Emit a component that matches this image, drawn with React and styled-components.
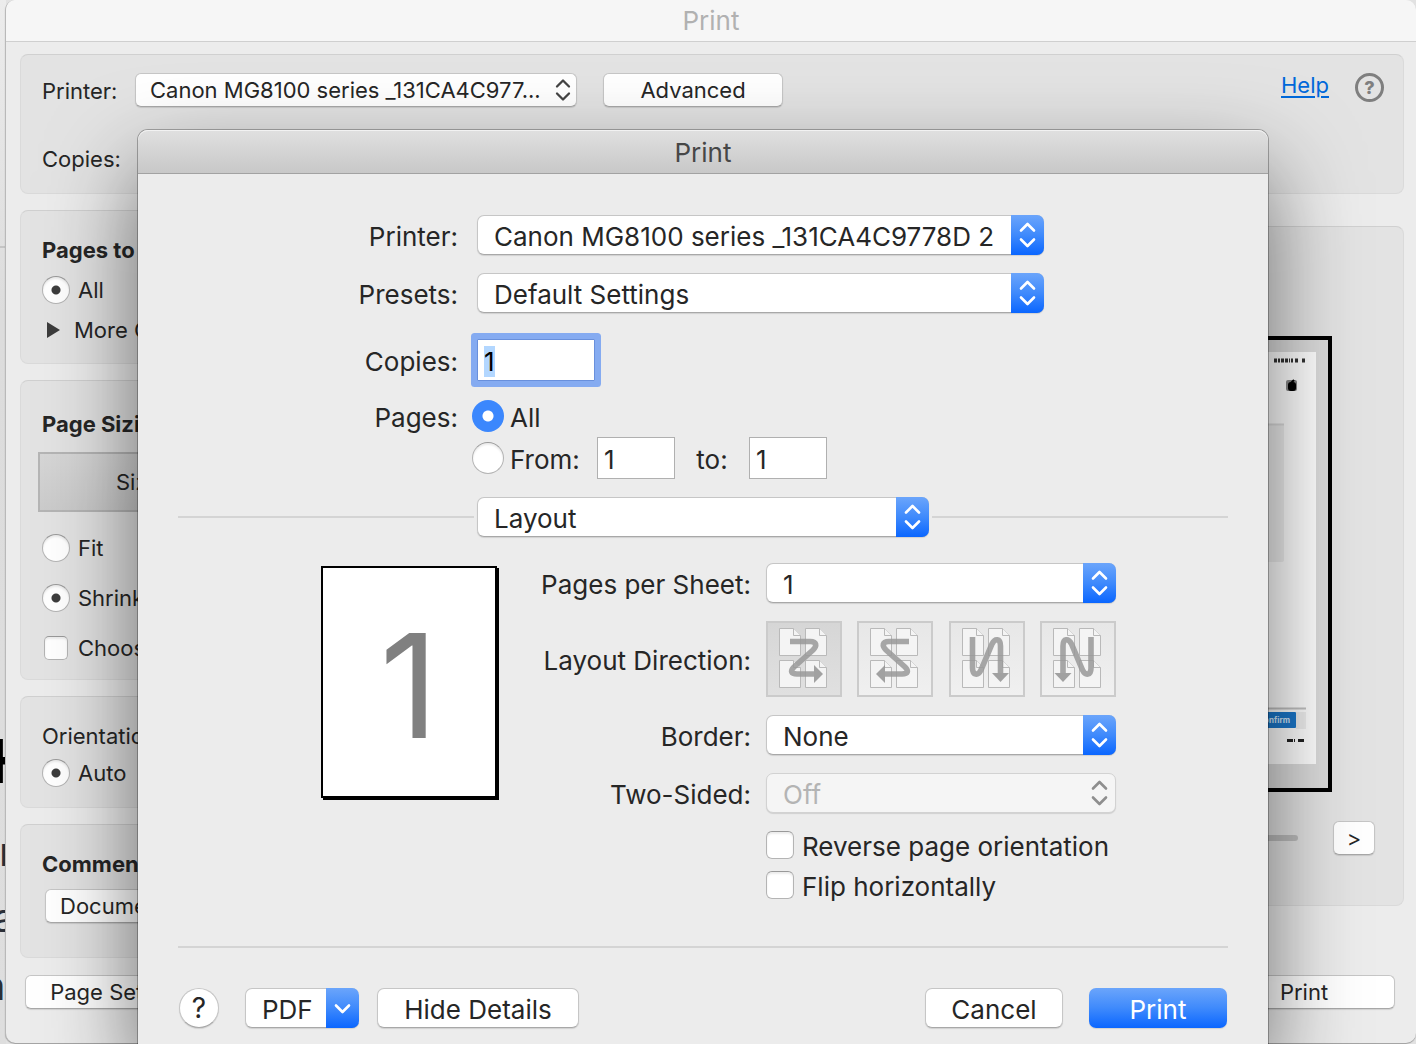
import React, {useState} from 'react'
import styled, {createGlobalStyle, css} from 'styled-components'

const directions = [
  {name: 'Left to right, then down', sideways: true},
  {name: 'Right to left, then down', sideways: true, mirrored: true},
  {name: 'Down, then left to right'},
  {name: 'Down, then right to left', mirrored: true}
]

const Z_PATH = 'M24 20.5H44C51 20.5 51 25 47 29L28 46C24 50 25 53 31 53H49'
const Z_ARROW = 'M48 44L57 53L48 62Z'
const N_PATH = 'M23.5 16V47C23.5 54.5 29 55 32 49L43 23C46 17 51.5 17 51.5 25V53'
const N_ARROW = 'M43 52H60L51.5 61Z'

const DirectionIcon = ({sideways, mirrored}) => (
  <svg width="72" height="72" viewBox="2 2 72 72" fill="none" aria-hidden="true">
    {[[13.5, 7.5], [39.5, 7.5], [13.5, 39.5], [39.5, 39.5]].map(([x, y]) => (
      <g key={`${x}-${y}`} transform={`translate(${x} ${y})`} stroke="#b9b9b9" fill="#f4f4f4">
        <path d="M0 0H14L21 7V27H0Z" />
        <path d="M14 0V7H21" />
      </g>
    ))}
    <g transform={mirrored ? `translate(${sideways ? 76 : 74.5} 0) scale(-1 1)` : undefined} opacity="0.85">
      <path d={sideways ? Z_PATH : N_PATH} stroke="#999" strokeWidth="5.6" />
      <path d={sideways ? Z_ARROW : N_ARROW} fill="#939393" />
    </g>
  </svg>
)

const PopUp = ({id, label, options, width, disabled}) => (
  <PopUpFrame $width={width}>
    <BigSelect id={id} aria-label={label} disabled={disabled}>
      {options.map(o => <option key={o}>{o}</option>)}
    </BigSelect>
    <Cap $disabled={disabled}>
      <svg width="33" height="40" viewBox="0 0 33 40" fill="none" stroke={disabled ? '#8e8e8e' : '#fff'} strokeWidth="2.6" strokeLinecap="round" strokeLinejoin="round">
        <path d="M10 15.5L16.5 9L23 15.5M10 24.5L16.5 31L23 24.5" />
      </svg>
    </Cap>
  </PopUpFrame>
)

const SmallPopUp = ({id, label, width, children}) => (
  <SmallPopUpFrame $width={width}>
    <SmallSelect id={id} aria-label={label}><option>{children}</option></SmallSelect>
    <SmallCap>
      <svg width="28" height="34" viewBox="0 0 28 34" fill="none" stroke="#444" strokeWidth="2.3" strokeLinecap="round" strokeLinejoin="round">
        <path d="M8 13.5L14 7.5L20 13.5M8 20.5L14 26.5L20 20.5" />
      </svg>
    </SmallCap>
  </SmallPopUpFrame>
)

const Thumbnail = () => (
  <svg width="328" height="412" viewBox="0 0 328 412" role="img" aria-label="Page preview">
    <rect width="328" height="412" fill="#fff" />
    <rect x="24" y="72" width="272" height="138" rx="2" fill="#f0f0f0" />
    <path d="M24 72.5H296" stroke="#dedede" strokeWidth="2" />
    <path d="M286 8.5H292M293 8.5H302M303 8.5H305M307 8.5H311M314 8.5H318" stroke="#333" strokeWidth="4" strokeDasharray="3 1" />
    <rect x="298" y="28" width="11" height="11" rx="2" fill="#888" />
    <rect x="300" y="30" width="8" height="9" rx="3" fill="#000" />
    <path d="M303 31L306 28" stroke="#000" strokeWidth="2" />
    <path d="M24 356.5H318" stroke="#c2c2c2" strokeWidth="2" />
    <rect x="308" y="360" width="10" height="17" fill="#f0f0f0" />
    <rect x="240" y="360" width="68" height="16" rx="1" fill="#1b78cc" />
    <text x="302" y="371" textAnchor="end" fontSize="8" fontWeight="700" fill="#d6e9fb">Confirm</text>
    <path d="M299 388.5H307M310 388.5H316" stroke="#222" strokeWidth="3" strokeDasharray="6 1" />
  </svg>
)

const BackWindow = () => (
  <Window>
    <WindowTitle>Print</WindowTitle>
    <WindowBody>
      <TopPanel>
        <TopRow>
          <TopLabel htmlFor="back-printer">Printer:</TopLabel>
          <SmallPopUp id="back-printer" width="442px">Canon MG8100 series _131CA4C977...</SmallPopUp>
          <SmallButton $width="180px">Advanced</SmallButton>
          <HelpGroup>
            <a href="#help">Help</a>
            <RoundHelp aria-label="Accessibility help">?</RoundHelp>
          </HelpGroup>
        </TopRow>
        <TopRow>
          <TopLabel as="span">Copies:</TopLabel>
        </TopRow>
      </TopPanel>
      <Columns>
        <Stack>
          <Panel $top={26} $bottom={20} $gap={12}>
            <Heading>Pages to Print</Heading>
            <Choice><Radio type="radio" name="back-pages" defaultChecked />All</Choice>
            <More>
              <svg width="14" height="16" viewBox="0 0 14 16"><path d="M1 0L14 8L1 16Z" fill="#3c3c3c" /></svg>
              More Options
            </More>
          </Panel>
          <Panel $top={30} $bottom={18} $gap={22}>
            <SizeGroup>
              <Heading>Page Sizing &amp; Handling</Heading>
              <SizeButton>Size</SizeButton>
            </SizeGroup>
            <Choice><Radio type="radio" name="back-size" />Fit</Choice>
            <Choice><Radio type="radio" name="back-size" defaultChecked />Shrink</Choice>
            <Choice><SmallCheck type="checkbox" />Choose</Choice>
          </Panel>
          <Panel $top={26} $bottom={21} $gap={9}>
            <Line>Orientation:</Line>
            <Choice><Radio type="radio" name="back-orient" defaultChecked />Auto</Choice>
          </Panel>
          <Panel $top={26} $bottom={35} $gap={11}>
            <Heading>Comments &amp; Forms</Heading>
            <Indent>
              <SmallPopUp label="Comments and forms" width="340px">Document</SmallPopUp>
            </Indent>
          </Panel>
        </Stack>
        <PreviewPanel>
          <PreviewFrame><Thumbnail /></PreviewFrame>
          <Pager>
            <Track type="range" aria-label="Preview page" />
            <SmallButton $width="42px" aria-label="Next page">&gt;</SmallButton>
          </Pager>
        </PreviewPanel>
      </Columns>
      <WindowFooter>
        <SmallButton $width="189px">Page Setup...</SmallButton>
        <SmallButton $width="182px">Print</SmallButton>
      </WindowFooter>
    </WindowBody>
  </Window>
)

const PrintDialog = () => {
  const [range, setRange] = useState('all')
  const [direction, setDirection] = useState(0)

  return (
    <Dialog role="dialog" aria-label="Print">
      <DialogTitle>Print</DialogTitle>
      <DialogBody>
        <Row $space={41}>
          <RowLabel htmlFor="printer">Printer:</RowLabel>
          <Inset><PopUp id="printer" width="567px" options={['Canon MG8100 series _131CA4C9778D 2']} /></Inset>
        </Row>
        <Row $space={18}>
          <RowLabel htmlFor="presets">Presets:</RowLabel>
          <Inset><PopUp id="presets" width="567px" options={['Default Settings']} /></Inset>
        </Row>
        <Row $space={26}>
          <RowLabel htmlFor="copies">Copies:</RowLabel>
          <Inset>
            <TextBox id="copies" $width="118px" defaultValue="1" autoFocus onFocus={e => e.target.select()} />
          </Inset>
        </Row>
        <Row $space={19}>
          <RowLabel as="span">Pages:</RowLabel>
          <BigChoice>
            <BigRadio type="radio" name="pages" checked={range === 'all'} onChange={() => setRange('all')} />
            <span>All</span>
          </BigChoice>
        </Row>
        <Row $space={5}>
          <span />
          <RangeFields>
            <BigChoice $width="125px">
              <BigRadio type="radio" name="pages" checked={range === 'from'} onChange={() => setRange('from')} />
              <span>From:</span>
            </BigChoice>
            <TextBox $width="78px" defaultValue="1" aria-label="From page" />
            <ToLabel htmlFor="to-page">to:</ToLabel>
            <TextBox id="to-page" $width="78px" defaultValue="1" />
          </RangeFields>
        </Row>
        <SectionPicker>
          <Rule />
          <PopUp label="Section" width="452px" options={['Layout']} />
          <Rule />
        </SectionPicker>
        <Pane>
          <SheetPreview>1</SheetPreview>
          <Options>
            <RowLabel htmlFor="per-sheet">Pages per Sheet:</RowLabel>
            <PopUp id="per-sheet" width="350px" options={['1']} />
            <RowLabel as="span">Layout Direction:</RowLabel>
            <Directions>
              {directions.map((d, i) => (
                <DirectionButton key={d.name} aria-label={d.name} aria-pressed={direction === i} $active={direction === i} onClick={() => setDirection(i)}>
                  <DirectionIcon {...d} />
                </DirectionButton>
              ))}
            </Directions>
            <RowLabel htmlFor="border">Border:</RowLabel>
            <PopUp id="border" width="350px" options={['None']} />
            <RowLabel htmlFor="two-sided">Two-Sided:</RowLabel>
            <PopUp id="two-sided" width="350px" options={['Off']} disabled />
            <span />
            <Checks>
              <BigCheckLabel><BigCheck type="checkbox" /><span>Reverse page orientation</span></BigCheckLabel>
              <BigCheckLabel><BigCheck type="checkbox" /><span>Flip horizontally</span></BigCheckLabel>
            </Checks>
          </Options>
        </Pane>
        <Rule />
        <DialogFooter>
          <HelpButton aria-label="Help">?</HelpButton>
          <PdfButton>
            <span>PDF</span>
            <Cap as="span">
              <svg width="33" height="40" viewBox="0 0 33 40" fill="none" stroke="#fff" strokeWidth="2.6" strokeLinecap="round" strokeLinejoin="round">
                <path d="M10 17.5L16.5 24L23 17.5" />
              </svg>
            </Cap>
          </PdfButton>
          <BigButton $width="202px">Hide Details</BigButton>
          <Actions>
            <BigButton $width="138px">Cancel</BigButton>
            <BigButton $width="138px" $primary>Print</BigButton>
          </Actions>
        </DialogFooter>
      </DialogBody>
    </Dialog>
  )
}

const App = () => (
  <Screen>
    <GlobalStyle />
    <Behind aria-hidden="true">
      <BehindLine />
      <Sliver $size={60} $top={716} $shift={-10} $bold>H</Sliver>
      <Sliver $size={40} $top={832} $shift={-1}>r</Sliver>
      <Sliver $size={40} $top={898} $shift={-7}>a</Sliver>
      <Sliver $size={40} $top={966} $shift={-17}>a</Sliver>
    </Behind>
    <BackWindow />
    <PrintDialog />
  </Screen>
)

export default App

const GlobalStyle = createGlobalStyle`
  * {
    box-sizing: border-box;
  }

  body {
    margin: 0;
    background: #e2e2e2;
    color: #262626;
    font-family: Inter, "Liberation Sans", sans-serif;
    font-size: 22px;
  }

  button, input, select {
    font: inherit;
    color: inherit;
    margin: 0;
    padding: 0;
    outline: none;
  }
`

const blueFill = 'linear-gradient(#6ba5fb, #3f8afc 50%, #0a66ff)'

const raised = css`
  background: #fff;
  border: 1px solid #c6c6c6;
  border-bottom-color: #a8a8a8;
  border-radius: 7px;
  box-shadow: 0 1px 1px rgba(0, 0, 0, 0.12);
`

const Screen = styled.div`
  position: relative;
  min-height: 100vh;
  padding: 0 0 1px 5px;
  overflow: hidden;
`

/* the page that shows past the left edge of the window */
const Behind = styled.div`
  position: absolute;
  inset: 0 auto 0 0;
  width: 6px;
  overflow: hidden;
  background: linear-gradient(#ececec, #dcdcdc 30%, #dedede);
`

const BehindLine = styled.div`
  height: 248px;
  border-bottom: 2px solid #c4c4c4;
`

const Sliver = styled.span`
  position: absolute;
  top: ${p => p.$top}px;
  left: ${p => p.$shift}px;
  font-size: ${p => p.$size}px;
  font-weight: ${p => p.$bold ? 700 : 400};
  line-height: ${p => p.$bold ? 90 : 40}px;
  color: ${p => p.$bold ? '#000' : '#2a2f38'};
`

const Window = styled.section`
  position: relative;
  z-index: 0;
  background: #ececec;
  border-left: 1px solid #b9b9b9;
  border-radius: 10px;
  box-shadow: 0 1px 1px rgba(0, 0, 0, 0.3);
  overflow: hidden;
`

const WindowTitle = styled.header`
  height: 42px;
  line-height: 42px;
  text-align: center;
  font-size: 26px;
  color: #b1b1b1;
  background: #f6f6f6;
  border-bottom: 1px solid #cfcfcf;
`

const WindowBody = styled.div`
  padding: 12px 12px 34px 14px;
`

const panelBox = css`
  background: #e3e3e3;
  border: 1px solid #dadada;
  border-top-color: #d0d0d0;
  border-radius: 8px;
`

const TopPanel = styled.div`
  ${panelBox}
  display: grid;
  gap: 34px;
  padding: 18px 19px 18px 21px;
`

const TopRow = styled.div`
  display: flex;
  align-items: center;
  height: 34px;
`

const TopLabel = styled.label`
  width: 93px;
  padding-top: 2px;
`

const HelpGroup = styled.div`
  display: flex;
  align-items: flex-start;
  align-self: flex-start;
  gap: 26px;
  margin-left: auto;
  line-height: 24px;

  a {
    color: #0068da;
    text-underline-offset: 3px;
  }
`

const RoundHelp = styled.button`
  width: 29px;
  height: 29px;
  border: 3px solid #7f7f7f;
  border-radius: 50%;
  background: none;
  color: #7f7f7f;
  font-size: 18px;
  font-weight: 800;
  line-height: 20px;
`

const smallRaised = css`
  ${raised}
  height: 34px;
  border-radius: 6px;
`

const SmallButton = styled.button`
  ${smallRaised}
  width: ${p => p.$width};
  white-space: nowrap;

  ${TopRow} > & {
    margin-left: 26px;
  }
`

const SmallPopUpFrame = styled.div`
  display: grid;
  width: ${p => p.$width};

  > * {
    grid-area: 1 / 1;
  }
`

const SmallSelect = styled.select`
  ${smallRaised}
  appearance: none;
  width: 100%;
  padding: 0 36px 0 14px;
`

const SmallCap = styled.span`
  justify-self: end;
  height: 34px;
  z-index: 1;
  pointer-events: none;
`

const Columns = styled.div`
  display: grid;
  grid-template-columns: 1fr 1fr;
  align-items: start;
  gap: 16px;
  margin-top: 16px;
`

const Stack = styled.div`
  display: grid;
  gap: 16px;
`

const Panel = styled.div`
  ${panelBox}
  display: flex;
  flex-direction: column;
  gap: ${p => p.$gap}px;
  padding: ${p => p.$top - 1}px 20px ${p => p.$bottom - 1}px 21px;
  white-space: nowrap;
`

const Line = styled.div`
  line-height: 28px;
`

const Heading = styled.h2`
  margin: 0;
  font-size: 22px;
  font-weight: 700;
  line-height: 28px;
`

const Choice = styled.label`
  display: flex;
  align-items: center;
  gap: 8px;
  height: 28px;
`

const roundWell = css`
  appearance: none;
  flex: none;
  background: #fff;
  border: 1px solid #b4b4b4;
  border-top-color: #999;
  border-radius: 50%;
  box-shadow: inset 0 2px 2px rgba(0, 0, 0, 0.08);
`

const Radio = styled.input`
  ${roundWell}
  width: 28px;
  height: 28px;

  &:checked {
    background: radial-gradient(circle, #3c3c3c 4px, #fff 5px);
  }
`

const SmallCheck = styled.input`
  ${roundWell}
  width: 24px;
  height: 24px;
  margin: 0 2px;
  border-radius: 5px;
`

const More = styled.button`
  display: flex;
  align-items: center;
  gap: 14px;
  height: 28px;
  padding-left: 4px;
  border: 0;
  background: none;
`

const SizeGroup = styled.div`
  display: grid;
  gap: 14px;
`

const SizeButton = styled.button`
  width: 200px;
  height: 60px;
  margin-left: -4px;
  border: 2px solid #b5b5b5;
  background: linear-gradient(#d6d6d6, #cbcbcb);
`

const Indent = styled.div`
  padding-left: 3px;
`

const PreviewPanel = styled.div`
  ${panelBox}
  display: flex;
  flex-direction: column;
  align-items: flex-end;
  gap: 29px;
  margin-top: 16px;
  padding: 109px 28px 50px;
`

const PreviewFrame = styled.div`
  margin-right: 43px;
  padding: 12px 12px 24px;
  border: 4px solid #000;
  background: #dcdcdc;

  svg {
    display: block;
  }
`

const Pager = styled.div`
  display: flex;
  align-items: center;
  gap: 35px;
`

const Track = styled.input`
  appearance: none;
  width: 300px;
  height: 6px;
  border-radius: 3px;
  background: #bdbdbd;
`

const WindowFooter = styled.footer`
  display: flex;
  justify-content: space-between;
  margin-top: 17px;
  padding: 0 9px 0 5px;
`

const Dialog = styled.section`
  position: absolute;
  z-index: 1;
  inset: 130px 148px 0 138px;
  font-size: 26px;
  background: #ececec;
  border-radius: 10px 10px 0 0;
  box-shadow: 0 0 0 1px rgba(0, 0, 0, 0.28), 0 40px 90px rgba(0, 0, 0, 0.55);
`

const DialogTitle = styled.header`
  height: 44px;
  line-height: 46px;
  text-align: center;
  color: #474747;
  background: linear-gradient(#e0e0e0, #c8c8c8);
  border-bottom: 1px solid #a2a2a2;
  border-radius: 10px 10px 0 0;
  box-shadow: inset 0 1px 0 #f2f2f2;
`

const DialogBody = styled.div`
  padding: 0 40px;
`

const Row = styled.div`
  display: grid;
  grid-template-columns: 280px 1fr;
  align-items: center;
  gap: 14px;
  margin-top: ${p => p.$space}px;
`

const RowLabel = styled.label`
  padding-top: 4px;
  line-height: 28px;
  text-align: right;
  white-space: nowrap;
`

const Inset = styled.div`
  display: flex;
  padding-left: 5px;
`

const PopUpFrame = styled.div`
  display: grid;
  flex: none;
  width: ${p => p.$width};

  > * {
    grid-area: 1 / 1;
  }
`

const BigSelect = styled.select`
  ${raised}
  appearance: none;
  width: 100%;
  height: 40px;
  padding: 3px 40px 0 16px;

  &:disabled {
    color: #b4b4b4;
    background: #f5f5f5;
    border-color: #d2d2d2;
    opacity: 1;
  }
`

const Cap = styled.div`
  justify-self: end;
  width: 33px;
  height: 40px;
  z-index: 1;
  border-radius: 0 7px 7px 0;
  background: ${p => p.$disabled ? 'none' : blueFill};
  pointer-events: none;

  svg {
    display: block;
  }
`

const TextBox = styled.input`
  width: ${p => p.$width};
  height: 42px;
  padding: 3px 6px 0;
  line-height: 34px;
  background: #fff;
  border: 1px solid #b0b0b0;

  &:focus {
    color: #000;
    border-color: #6990dc;
    border-radius: 1px;
    box-shadow: 0 0 0 6px #85abf1;
  }

  &::selection {
    background: #b3d7ff;
    color: #000;
  }
`

const RangeFields = styled.div`
  display: flex;
  align-items: center;
`

const BigChoice = styled.label`
  display: flex;
  align-items: center;
  gap: 6px;
  width: ${p => p.$width || 'auto'};
  height: 32px;

  > span {
    padding-top: 4px;
    line-height: 28px;
  }
`

const BigRadio = styled.input`
  ${roundWell}
  width: 32px;
  height: 32px;

  &:checked {
    border: 0;
    background: radial-gradient(circle, #fff 5px, #3b87fd 6px);
    box-shadow: none;
  }
`

const ToLabel = styled.label`
  width: 74px;
  padding-top: 4px;
  line-height: 28px;
  text-align: center;
`

const Rule = styled.div`
  height: 2px;
  background: #d4d4d4;
`

const SectionPicker = styled.div`
  display: flex;
  align-items: center;
  gap: 3px;
  margin-top: 18px;

  ${Rule} {
    flex: 296px 0 0;
  }

  ${Rule}:last-child {
    flex: 1;
  }
`

const Pane = styled.div`
  display: flex;
  align-items: flex-start;
  padding: 26px 0 47px 143px;
`

const SheetPreview = styled.div`
  flex: none;
  width: 176px;
  height: 232px;
  margin: 3px 2px 0 0;
  border: 2px solid #000;
  background: #fff;
  box-shadow: 2px 2px 0 #000;
  color: #808080;
  font-size: 144px;
  line-height: 236px;
  text-align: center;
`

const Options = styled.div`
  display: grid;
  grid-template-columns: 252px 350px;
  align-items: center;
  gap: 18px 15px;
`

const Directions = styled.div`
  display: flex;
  justify-content: space-between;
`

const DirectionButton = styled.button`
  width: 76px;
  height: 76px;
  border: 2px solid #cbcbcb;
  background: ${p => p.$active ? 'linear-gradient(#d6d6d6, #e0e0e0)' : 'linear-gradient(#e7e7e7, #f0f0f0)'};

  svg {
    display: block;
  }
`

const Checks = styled.div`
  display: grid;
  gap: 12px;
`

const BigCheckLabel = styled.label`
  display: flex;
  align-items: center;
  gap: 8px;
  height: 28px;

  > span {
    padding-top: 4px;
    line-height: 28px;
  }
`

const BigCheck = styled.input`
  ${roundWell}
  width: 28px;
  height: 28px;
  border-radius: 6px;
`

const DialogFooter = styled.footer`
  display: flex;
  align-items: center;
  gap: 18px;
  padding: 40px 1px 16px;
`

const HelpButton = styled.button`
  ${raised}
  width: 40px;
  height: 40px;
  margin-right: 8px;
  border-radius: 50%;
  font-size: 28px;
  line-height: 36px;
`

const PdfButton = styled.button`
  ${raised}
  display: flex;
  align-items: center;
  justify-content: space-between;
  width: 114px;
  height: 40px;
  padding-left: 16px;
  border-right: 0;

  > span:first-child {
    padding-top: 3px;
  }
`

const BigButton = styled.button`
  ${raised}
  width: ${p => p.$width};
  height: 40px;
  padding-top: 2px;

  ${p => p.$primary && css`
    color: #fff;
    border: 0;
    background: ${blueFill};
  `}
`

const Actions = styled.div`
  display: flex;
  gap: 26px;
  margin-left: auto;
`
